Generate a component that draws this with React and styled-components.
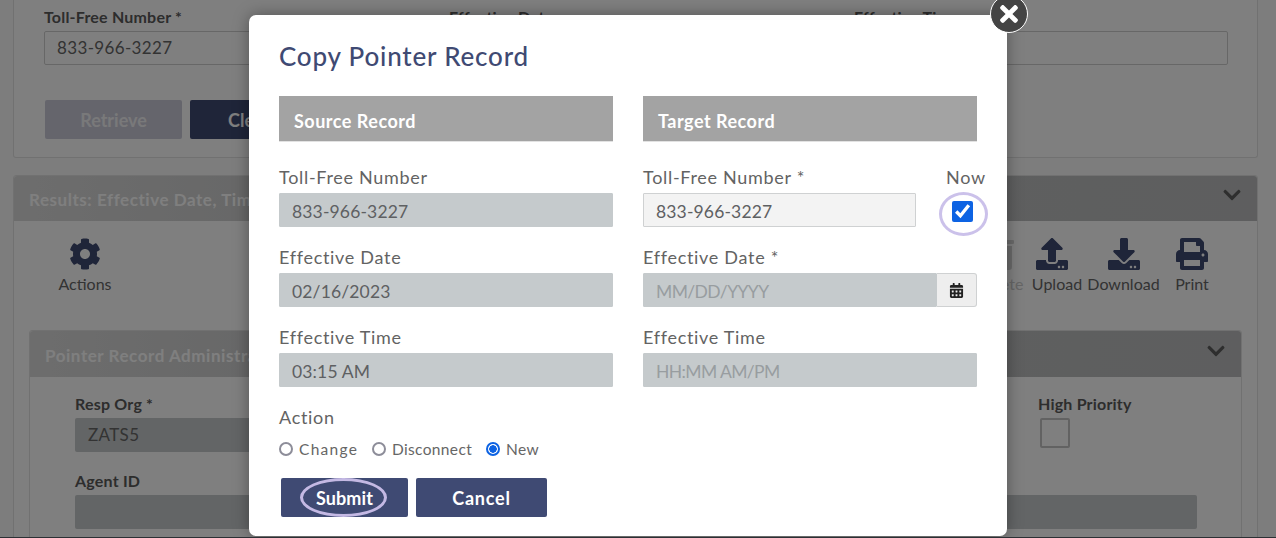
import React from "react";
import styled, { createGlobalStyle } from "styled-components";
import { FaCog, FaUpload, FaDownload, FaPrint, FaChevronDown, FaCalendarAlt, FaTimes, FaTrashAlt } from "react-icons/fa";

const Global = createGlobalStyle`
  html, body { margin: 0; padding: 0; height: 538px; overflow: hidden; background: #fff; }
  body { font-family: "Lato", "Liberation Sans", sans-serif; color: #555; }
  * { box-sizing: border-box; }
`;

const Page = styled.div`
  position: relative;
  width: 1276px;
  height: 538px;
  overflow: hidden;
  background: #fbfbfb;
  border-bottom: 1px solid #2c3034;
`;
const Backdrop = styled.div`
  padding: 0 18px 0 13px;
  display: flex;
  flex-direction: column;
  gap: 17px;
`;
const SearchPanel = styled.section`
  height: 158px;
  background: #fff;
  border: 1px solid #e3e3e3;
  border-top: 0;
  border-radius: 0 0 3px 3px;
  padding: 8px 30px 0 30px;
`;
const FieldRow = styled.div`
  display: grid;
  grid-template-columns: repeat(3, 374px);
  column-gap: 31px;
`;
const BgLabel = styled.div`
  font-size: 16px;
  line-height: 18px;
  font-weight: 700;
  letter-spacing: .2px;
  color: #5a5a5a;
  margin-bottom: 5px;
  white-space: nowrap;
`;
const BgInput = styled.div`
  height: 34px;
  border: 1px solid #cfcfcf;
  border-radius: 2px;
  background: ${p => p.$filled ? "#c6cbcc" : "#fff"};
  padding: 0 12px;
  font-size: 17px;
  line-height: 32px;
  letter-spacing: .35px;
  color: #666;
`;
const BgButtons = styled.div`
  display: flex;
  gap: 8px;
  margin-top: 35px;
  margin-left: 1px;
`;
const BgButton = styled.div`
  width: ${p => p.$w}px;
  height: 39px;
  border-radius: 2px;
  background: ${p => p.$dim ? "#cacad8" : "#3f4a73"};
  color: ${p => p.$dim ? "#f2f2f5" : "#fff"};
  font-size: 18px;
  font-weight: 700;
  line-height: 41px;
  text-align: center;
`;
const ResultsPanel = styled.section`
  background: #fff;
  border: 1px solid #e3e3e3;
  border-radius: 3px 3px 0 0;
  height: 400px;
`;
const BgHeader = styled.header`
  height: ${p => p.$h || 45}px;
  background: linear-gradient(90deg, #dbdbdb 0%, #c0c1c2 45%, #bcbdbe 100%);
  display: flex;
  align-items: center;
  justify-content: space-between;
  padding: 2px 15px 0 15px;
  color: #fff;
  font-size: 17px;
  font-weight: 700;
  letter-spacing: .55px;
  border-radius: 3px 3px 0 0;
  svg { color: #5c5c5c; font-size: 20px; margin-bottom: 9px; }
`;
const Toolbar = styled.div`
  height: 109px;
  display: flex;
  padding: 17px 36px 0 0;
`;
const ToolGap = styled.div` flex: 1; `;
const Tool = styled.div`
  display: flex;
  flex-direction: column;
  align-items: center;
  width: ${p => p.$w || 72}px;
  margin-left: ${p => p.$ml || 0}px;
  font-size: 16px;
  svg {
    height: 32px;
    width: ${p => p.$iw || 34}px;
    color: ${p => p.$faded ? "#d5d5d5" : "#3f4a73"};
    margin: 0 ${p => p.$shift || 0}px 4px 0;
  }
`;
const ToolText = styled.span`
  line-height: 20px;
  color: ${p => p.$faded ? "#ccc" : "#666"};
  white-space: nowrap;
`;
const AdminPanel = styled.section`
  margin: 0 15px;
  height: 220px;
  border: 1px solid #e3e3e3;
  border-radius: 3px 3px 0 0;
`;
const AdminBody = styled.div`
  padding: 18px 44px 0 45px;
  display: flex;
  flex-direction: column;
  gap: 20px;
`;
const AdminTop = styled.div`
  display: flex;
  justify-content: space-between;
`;
const RespOrg = styled.div` width: 300px; `;
const Priority = styled.div` width: 159px; `;
const Square = styled.div`
  width: 30px;
  height: 30px;
  margin: 4px 0 0 2px;
  border: 2px solid #c4c4c4;
  border-radius: 2px;
`;
const TightLabel = styled(BgLabel)`
  margin-bottom: -4px;
`;
const GreyInput = styled(BgInput)`
  margin-top: 9px;
  border: 0;
  padding: 0 13px;
  line-height: 34px;
`;
const AgentInput = styled(BgInput)` border: 0; `;

const Overlay = styled.div`
  position: absolute;
  inset: 0;
  background: rgba(0, 0, 0, .5);
  padding: 15px 269px 0 249px;
`;
const Modal = styled.div`
  position: relative;
  width: 758px;
  height: 521px;
  background: #fff;
  border-radius: 7px;
  box-shadow: 0 0 16px rgba(0, 0, 0, .35);
  padding: 26px 30px 0;
`;
const Close = styled.button`
  position: absolute;
  top: -20px;
  right: -21px;
  width: 38px;
  height: 38px;
  padding: 0;
  border: 1px solid #fff;
  border-radius: 50%;
  background: #444;
  color: #fff;
  display: flex;
  align-items: center;
  justify-content: center;
  font-size: 26px;
`;
const Title = styled.h1`
  margin: 0 0 24px;
  font-size: 26px;
  line-height: 31px;
  font-weight: 500;
  letter-spacing: .8px;
  color: #3f4a73;
`;
const Columns = styled.div`
  display: grid;
  grid-template-columns: 334px 334px;
  column-gap: 30px;
`;
const Column = styled.div` display: flex; flex-direction: column; `;
const SectionHead = styled.div`
  height: 46px;
  background: #a3a3a3;
  border-bottom: 1px solid #e2e2e2;
  padding: 0 15px;
  color: #fff;
  font-size: 18px;
  line-height: 50px;
  font-weight: 700;
  letter-spacing: .5px;
  margin-bottom: 25px;
`;
const Field = styled.div`
  margin-bottom: 20px;
  position: relative;
`;
const Label = styled.label`
  display: block;
  font-size: 18px;
  line-height: 20px;
  letter-spacing: .7px;
  color: #636363;
  margin-bottom: 6px;
  white-space: nowrap;
`;
const Input = styled.div`
  height: 34px;
  background: ${p => p.$light ? "#f3f3f3" : "#c5cacc"};
  border: 1px solid ${p => p.$light ? "#cfd1d2" : "#c5cacc"};
  border-radius: 1px;
  padding: 0 12px;
  font-size: 17.5px;
  line-height: 35px;
  letter-spacing: ${p => p.$placeholder ? "-.6px" : ".15px"};
  color: ${p => p.$placeholder ? "#989da0" : "#5e6062"};
`;
const NowRow = styled.div`
  display: flex;
  gap: 30px;
  margin-right: -8px;
`;
const NowField = styled(Field)` width: 273px; `;
const NowBox = styled.div`
  position: relative;
  flex: 1;
  text-align: center;
`;
const NowLabel = styled(Label)`
  text-align: center;
  margin-left: -1px;
  margin-right: -2px;
`;
const Check = styled.input`
  display: block;
  width: 21px;
  height: 21px;
  margin: 14px 0 0 6px;
  accent-color: #0d63e3;
`;
const Ring = styled.span`
  position: absolute;
  left: -7px;
  top: 25px;
  width: 49px;
  height: 44px;
  border: 3px solid #cbc1ea;
  border-radius: 50%;
  pointer-events: none;
`;
const DateGroup = styled.div` display: flex; `;
const DateInput = styled(Input)` flex: 1; `;
const Addon = styled.div`
  width: 40px;
  height: 34px;
  background: #eee;
  border: 1px solid #cfd1d2;
  border-left: 0;
  border-radius: 0 3px 3px 0;
  display: flex;
  align-items: center;
  justify-content: center;
  color: #222;
  font-size: 15px;
`;
const ActionLabel = styled(Label)` margin: 0 0 12px; `;
const Radios = styled.div`
  display: flex;
  align-items: center;
  height: 20px;
`;
const Radio = styled.label`
  display: flex;
  align-items: center;
  gap: 6px;
  width: ${p => p.$w}px;
  font-size: 15.5px;
  letter-spacing: ${p => p.$ls || ".35px"};
  color: #666;
`;
const RadioDot = styled.input`
  appearance: none;
  flex: none;
  width: 14px;
  height: 14px;
  margin: 0;
  border: 2px solid #8d8d99;
  border-radius: 50%;
  background: #fff;
  &:checked {
    border-color: #0d63e3;
    background: radial-gradient(circle, #0d63e3 0 3.5px, #fff 4px);
  }
`;
const Actions = styled.div`
  display: flex;
  gap: 8px;
  margin: 19px 0 0 2px;
`;
const Btn = styled.button`
  position: relative;
  width: ${p => p.$w}px;
  height: 39px;
  padding: 0;
  border: 0;
  border-radius: 2px;
  background: #3f4a73;
  color: #fff;
  font: 700 18px "Lato", sans-serif;
  letter-spacing: ${p => p.$ls || ".1px"};
`;
const BtnRing = styled.span`
  position: absolute;
  left: 19px;
  top: 0;
  width: 87px;
  height: 39px;
  border: 3px solid #c4b9e4;
  border-radius: 50%;
`;

export default function App() {
  return (
    <Page>
      <Global />
      <Backdrop>
        <SearchPanel>
          <FieldRow>
            <div><BgLabel>Toll-Free Number *</BgLabel><BgInput>833-966-3227</BgInput></div>
            <div><BgLabel>Effective Date</BgLabel><BgInput /></div>
            <div><BgLabel>Effective Time</BgLabel><BgInput /></div>
          </FieldRow>
          <BgButtons>
            <BgButton $dim $w={137}>Retrieve</BgButton>
            <BgButton $w={118}>Clear</BgButton>
          </BgButtons>
        </SearchPanel>
        <ResultsPanel>
          <BgHeader>Results: Effective Date, Time<FaChevronDown /></BgHeader>
          <Toolbar>
            <Tool $ml={35}><FaCog /><ToolText>Actions</ToolText></Tool>
            <ToolGap />
            <Tool $faded $iw={30}><FaTrashAlt /><ToolText $faded>Delete</ToolText></Tool>
            <Tool $w={54} $ml={-6} $shift={10}><FaUpload /><ToolText>Upload</ToolText></Tool>
            <Tool $w={79}><FaDownload /><ToolText>Download</ToolText></Tool>
            <Tool $w={58}><FaPrint /><ToolText>Print</ToolText></Tool>
          </Toolbar>
          <AdminPanel>
            <BgHeader $h={46}>Pointer Record Administration<FaChevronDown /></BgHeader>
            <AdminBody>
              <AdminTop>
                <RespOrg><TightLabel>Resp Org *</TightLabel><GreyInput $filled>ZATS5</GreyInput></RespOrg>
                <Priority><BgLabel>High Priority</BgLabel><Square /></Priority>
              </AdminTop>
              <div><BgLabel>Agent ID</BgLabel><AgentInput $filled /></div>
            </AdminBody>
          </AdminPanel>
        </ResultsPanel>
      </Backdrop>
      <Overlay>
        <Modal>
          <Close aria-label="Close"><FaTimes /></Close>
          <Title>Copy Pointer Record</Title>
          <Columns>
            <Column>
              <SectionHead>Source Record</SectionHead>
              <Field><Label>Toll-Free Number</Label><Input>833-966-3227</Input></Field>
              <Field><Label>Effective Date</Label><Input>02/16/2023</Input></Field>
              <Field><Label>Effective Time</Label><Input>03:15 AM</Input></Field>
            </Column>
            <Column>
              <SectionHead>Target Record</SectionHead>
              <NowRow>
                <NowField><Label>Toll-Free Number *</Label><Input $light>833-966-3227</Input></NowField>
                <NowBox>
                  <NowLabel>Now</NowLabel>
                  <Check type="checkbox" defaultChecked />
                  <Ring />
                </NowBox>
              </NowRow>
              <Field>
                <Label>Effective Date *</Label>
                <DateGroup><DateInput $placeholder>MM/DD/YYYY</DateInput><Addon><FaCalendarAlt /></Addon></DateGroup>
              </Field>
              <Field><Label>Effective Time</Label><Input $placeholder>HH:MM AM/PM</Input></Field>
            </Column>
          </Columns>
          <ActionLabel>Action</ActionLabel>
          <Radios>
            <Radio $w={93} $ls="1.3px"><RadioDot type="radio" name="action" />Change</Radio>
            <Radio $w={114}><RadioDot type="radio" name="action" />Disconnect</Radio>
            <Radio $w={60}><RadioDot type="radio" name="action" defaultChecked />New</Radio>
          </Radios>
          <Actions>
            <Btn $w={127}>Submit<BtnRing /></Btn>
            <Btn $w={131} $ls=".8px">Cancel</Btn>
          </Actions>
        </Modal>
      </Overlay>
    </Page>
  );
}
